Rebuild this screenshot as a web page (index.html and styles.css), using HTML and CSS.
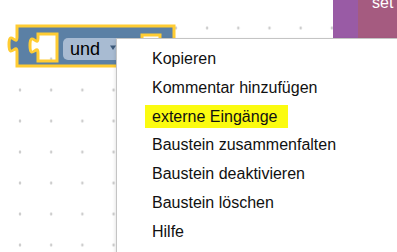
FILE: index.html
```html
<!DOCTYPE html>
<html lang="de">
<head>
    <meta charset="UTF-8">
    <meta name="viewport" content="width=device-width, initial-scale=1.0">
    <title>Baustein Kontextmenü</title>
    <link rel="stylesheet" href="styles.css">
</head>
<body>
    <div class="workspace">
        <!-- selected logic block -->
        <svg class="block" width="180" height="75" viewBox="0 0 180 75">
            <path class="block-shape" fill-rule="evenodd"
                  d="M17,26 H174 V66 H17 V52 c0,-10 -8,8 -8,-7.5 s8,2.5 8,-7.5 Z
                     M38,34 H57 V61 H38 V53 c0,-10 -8,8 -8,-7.5 s8,2.5 8,-7.5 Z
                     M142,35 H160 V64 H142 Z"/>
            <rect class="dropdown" x="63" y="38" width="62" height="22" rx="5"/>
            <text class="dropdown-text" x="70" y="55">und</text>
            <polygon class="dropdown-arrow" points="110,45.5 116,45.5 113,50"/>
        </svg>

        <!-- block peeking in from the top right -->
        <div class="corner-block">
            <div class="corner-proc"></div>
            <div class="corner-var">set</div>
        </div>

        <ul class="menu">
            <li class="menu-item">Kopieren</li>
            <li class="menu-item">Kommentar hinzufügen</li>
            <li class="menu-item"><span class="marker">externe Eingänge</span></li>
            <li class="menu-item">Baustein zusammenfalten</li>
            <li class="menu-item">Baustein deaktivieren</li>
            <li class="menu-item">Baustein löschen</li>
            <li class="menu-item">Hilfe</li>
        </ul>
    </div>
</body>
</html>
```

FILE: styles.css
```css
* {
    box-sizing: border-box;
    margin: 0;
    padding: 0;
}
body {
    font-family: 'Liberation Sans', Arial, sans-serif;
    background-color: #fff;
    color: #111;
}
.workspace {
    position: relative;
    width: 397px;
    height: 252px;
    overflow: hidden;
    background-color: #fff;
    background-image: radial-gradient(circle, #c8c8c8 0, #c8c8c8 1px, transparent 1.6px);
    background-size: 31.2px 31px;
    background-position: 4.4px 12.5px;
}
.block {
    position: absolute;
    left: 0;
    top: 0;
}
.block-shape {
    fill: #5b80a5;
    stroke: #fc3;
    stroke-width: 3;
}
.dropdown {
    fill: #a8bbd2;
}
.dropdown-text {
    font-family: 'Liberation Sans', Arial, sans-serif;
    font-size: 18px;
    fill: #000;
}
.dropdown-arrow {
    fill: #3d5a7a;
}
.corner-block {
    position: absolute;
    left: 333px;
    top: 0;
    display: flex;
    height: 40px;
}
.corner-proc {
    width: 25px;
    background-color: #995ba5;
}
.corner-var {
    width: 40px;
    background-color: #a55b80;
    color: #fff;
    font-size: 16px;
    line-height: 1;
    padding-left: 14px;
    margin-top: -5px;
    padding-top: 0;
}
.menu {
    position: absolute;
    left: 116px;
    top: 38px;
    width: 300px;
    height: 240px;
    list-style: none;
    background-color: #fff;
    border: 1px solid #c4c4c4;
    box-shadow: 0 2px 4px rgba(0, 0, 0, 0.15);
    padding-top: 6px;
}
.menu-item {
    padding-left: 35px;
    font-size: 16px;
    line-height: 28.8px;
    white-space: nowrap;
}
.marker {
    display: inline-block;
    line-height: 23px;
    margin-left: -7px;
    padding: 0 11px 0 7px;
    background-color: #fbfb10;
}
```
